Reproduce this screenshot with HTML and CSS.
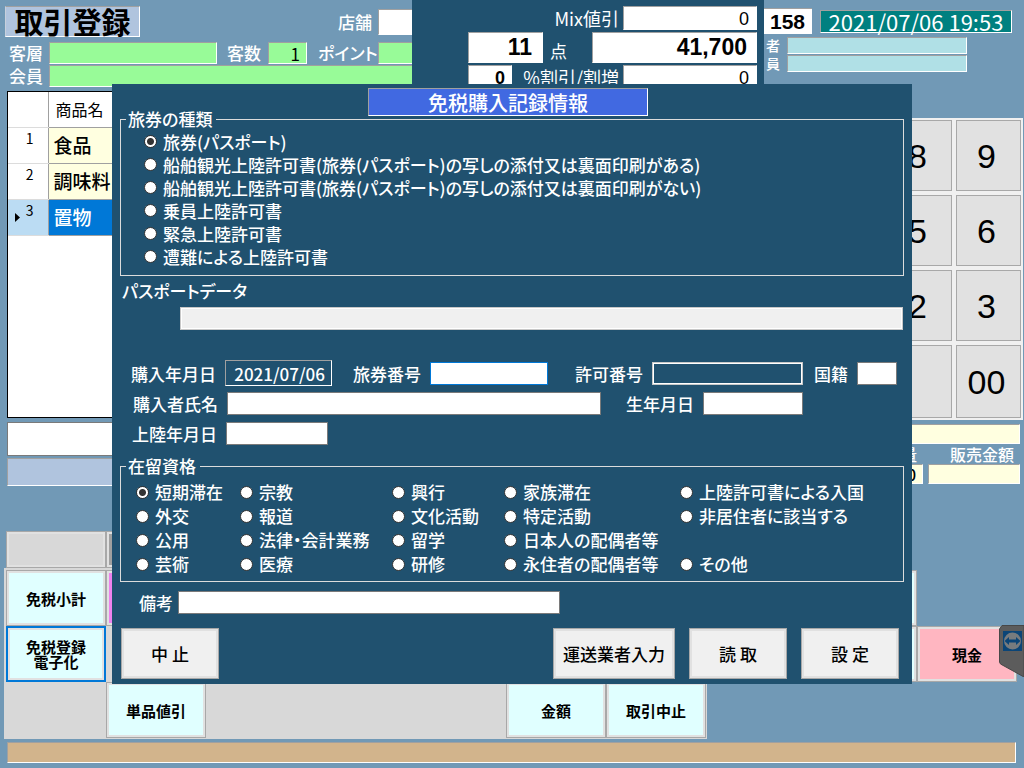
FILE: index.html
```html
<!DOCTYPE html>
<html lang="ja">
<head>
<meta charset="utf-8">
<meta name="viewport" content="width=device-width, initial-scale=1">
<title>免税購入記録情報</title>
<link rel="stylesheet" href="styles.css">
</head>
<body>
<div class="register">
  <header class="top">
    <div class="top-left">
      <div class="top-row title-row">
        <h1 class="screen-title">取引登録</h1>
        <label class="push" for="store">店舗</label>
        <input id="store" class="sunken clip-field tall" type="text">
      </div>
      <div class="top-row">
        <label class="lead" for="segment">客層</label>
        <input id="segment" class="sunken green segment" type="text">
        <label class="guests-label" for="guests">客数</label>
        <input id="guests" class="sunken green guests" type="text" value="1">
        <label class="points-label kana" for="points">ポイント</label>
        <input id="points" class="sunken green clip-field" type="text">
      </div>
      <div class="top-row">
        <label class="lead" for="member">会員</label>
        <input id="member" class="sunken green member" type="text">
      </div>
    </div>
    <div class="totals">
      <div class="total-row">
        <label class="push" for="mix">Mix値引</label>
        <output id="mix" class="sunken amount">0</output>
      </div>
      <div class="total-row big">
        <output id="count" class="sunken count">11</output>
        <label class="unit" for="count">点</label>
        <output class="sunken total">41,700</output>
      </div>
      <div class="total-row">
        <output id="rate" class="sunken rate">0</output>
        <label class="push" for="discount">%割引/割増</label>
        <output id="discount" class="sunken amount">0</output>
      </div>
    </div>
    <div class="top-right">
      <div class="status-row">
        <span class="receipt-no">158</span>
        <time class="clock" datetime="2021-07-06T19:53">2021/07/06 19:53</time>
      </div>
      <div class="staff-row">
        <label for="staff1">者</label>
        <input id="staff1" class="sunken powder" type="text">
      </div>
      <div class="staff-row">
        <label for="staff2">員</label>
        <input id="staff2" class="sunken powder" type="text">
      </div>
    </div>
  </header>

  <main class="work">
    <section class="sale">
      <div class="grid-frame">
        <table class="items">
          <thead><tr><th class="num"></th><th class="name">商品名</th></tr></thead>
          <tbody>
            <tr><th class="num">1</th><td>食品</td></tr>
            <tr><th class="num">2</th><td>調味料</td></tr>
            <tr class="selected"><th class="num"><svg class="marker" viewBox="0 0 5 9" aria-hidden="true"><path d="M0 0 5 4.500 0 9Z"/></svg>3</th><td>置物</td></tr>
          </tbody>
        </table>
      </div>
      <input class="entry" type="text" aria-label="入力">
      <div class="message"></div>
    </section>
    <section class="side">
      <div class="keypad">
        <button type="button">7</button><button type="button">8</button><button type="button">9</button>
        <button type="button">4</button><button type="button">5</button><button type="button">6</button>
        <button type="button">1</button><button type="button">2</button><button type="button">3</button>
        <button type="button">0</button><button type="button"></button><button type="button">00</button>
      </div>
      <div class="line-entry">
        <input class="sunken cream wide" type="text" aria-label="商品">
        <label for="qty">数量</label>
        <label for="price">販売金額</label>
        <input id="qty" class="sunken cream" type="text" value="0">
        <input id="price" class="sunken cream" type="text">
      </div>
    </section>
  </main>

  <section class="functions">
    <div class="fn-top">
      <button type="button" class="fn blank" aria-label="空き"></button>
      <button type="button" class="fn dim" aria-label="空き"></button>
    </div>
    <div class="fn-panels">
      <div class="fn-panel">
        <button type="button" class="fn">免税小計</button>
        <button type="button" class="fn violet" aria-label="小計"></button>
        <button type="button" class="fn current row2">免税登録<br>電子化</button>
        <button type="button" class="fn row3 col2">単品値引</button>
        <button type="button" class="fn row3 col6">金額</button>
        <button type="button" class="fn row3 col7">取引中止</button>
      </div>
      <div class="fn-panel plain">
        <button type="button" class="fn col2" aria-label="空き"></button>
        <button type="button" class="fn col2 row2" aria-label="空き"></button>
        <button type="button" class="fn pink col3 row2">現金</button>
      </div>
    </div>
  </section>
  <footer class="guide"></footer>

  <div class="overlay">
    <form class="dialog" role="dialog" aria-labelledby="dlg-title">
      <h2 id="dlg-title" class="dialog-title">免税購入記録情報</h2>

      <fieldset class="group passport-kind">
        <legend>旅券の種類</legend>
        <label><input type="radio" name="kind" checked>旅券(パスポート)</label>
        <label><input type="radio" name="kind">船舶観光上陸許可書(旅券(パスポート)の写しの添付又は裏面印刷がある)</label>
        <label><input type="radio" name="kind">船舶観光上陸許可書(旅券(パスポート)の写しの添付又は裏面印刷がない)</label>
        <label><input type="radio" name="kind">乗員上陸許可書</label>
        <label><input type="radio" name="kind">緊急上陸許可書</label>
        <label><input type="radio" name="kind">遭難による上陸許可書</label>
      </fieldset>

      <div class="passport-data">
        <label for="pdata">パスポートデータ</label>
        <input id="pdata" type="text" readonly>
      </div>

      <div class="fields">
        <div class="field-row row-a">
          <label for="bought">購入年月日</label>
          <output id="bought" class="date">2021/07/06</output>
          <label for="pno">旅券番号</label>
          <input id="pno" class="focused" type="text" autofocus>
          <label for="permit">許可番号</label>
          <input id="permit" class="off" type="text" readonly>
          <label for="nation">国籍</label>
          <input id="nation" type="text">
        </div>
        <div class="field-row row-b">
          <label for="buyer">購入者氏名</label>
          <input id="buyer" type="text">
          <label for="birth">生年月日</label>
          <input id="birth" type="text">
        </div>
        <div class="field-row row-c">
          <label for="landing">上陸年月日</label>
          <input id="landing" type="text">
        </div>
      </div>

      <fieldset class="group status">
        <legend>在留資格</legend>
        <div class="status-grid">
          <label><input type="radio" name="status" checked>短期滞在</label>
          <label><input type="radio" name="status">外交</label>
          <label><input type="radio" name="status">公用</label>
          <label><input type="radio" name="status">芸術</label>
          <label><input type="radio" name="status">宗教</label>
          <label><input type="radio" name="status">報道</label>
          <label><input type="radio" name="status">法律・会計業務</label>
          <label><input type="radio" name="status">医療</label>
          <label><input type="radio" name="status">興行</label>
          <label><input type="radio" name="status">文化活動</label>
          <label><input type="radio" name="status">留学</label>
          <label><input type="radio" name="status">研修</label>
          <label><input type="radio" name="status">家族滞在</label>
          <label><input type="radio" name="status">特定活動</label>
          <label><input type="radio" name="status">日本人の配偶者等</label>
          <label><input type="radio" name="status">永住者の配偶者等</label>
          <label><input type="radio" name="status">上陸許可書による入国</label>
          <label><input type="radio" name="status">非居住者に該当する</label>
          <label class="last"><input type="radio" name="status">その他</label>
        </div>
      </fieldset>

      <div class="remarks">
        <label for="note">備考</label>
        <input id="note" type="text">
      </div>

      <div class="actions">
        <button type="button" class="action cancel">中 止</button>
        <button type="button" class="action wide">運送業者入力</button>
        <button type="button" class="action">読 取</button>
        <button type="submit" class="action">設 定</button>
      </div>
    </form>
  </div>

  <svg class="remote-tab" viewBox="0 0 25 52" aria-hidden="true">
    <path d="M3 .5H25V52L1.500 39 .5 37V4Z" fill="#5c5c5c" stroke="#474747"/>
    <rect x="4" y="6" width="19" height="20" fill="#0b4577"/>
    <circle cx="13.500" cy="16" r="8.500" fill="#777b7e"/>
    <path d="M5.500 16 10 12V14.500H17V12L21.500 16 17 20V17.500H10V20Z" fill="#0b4577"/>
  </svg>
</div>
</body>
</html>
```
FILE: styles.css
```css
* {
  box-sizing: border-box;
}

body {
  margin: 0;
  background: #7199b6;
  color: #fff;
  font-family: "Noto Sans CJK JP", sans-serif;
  font-size: 17px;
  font-weight: 400;
  line-height: 20px;
}

input,
button {
  font: inherit;
  margin: 0;
  padding: 0;
  border-radius: 0;
  min-width: 0;
}

input {
  outline: none;
}

label {
  white-space: nowrap;
}

.register {
  position: relative;
  display: flex;
  flex-direction: column;
  min-height: 100vh;
  overflow: hidden;
}

.sunken {
  border: 1px solid #fff;
  border-top-color: #a0a0a0;
  border-left-color: #a0a0a0;
  background: #fff;
  color: #000;
}

.green { background: #98fb98; }
.powder { background: #b0e0e6; }
.cream { background: #ffffe0; }
.push { margin-left: auto; }
.kana { font-feature-settings: "palt"; }

/* Header */
.top {
  display: grid;
  grid-template-columns: 412fr 352fr 260fr;
  height: 84px;
}

.top-left {
  display: flex;
  flex-direction: column;
  gap: 1px;
  padding: 6px 0 0 9px;
  font-weight: 500;
}

.top-row {
  display: flex;
  align-items: center;
  line-height: 18px;
}

.top-row .sunken {
  height: 22px;
}

.title-row {
  height: 31px;
  margin: 0 0 4px -4px;
}

.screen-title {
  width: 135px;
  height: 31px;
  margin: 0;
  border: 1px solid #fff;
  border-top-color: #a0a0a0;
  border-left-color: #c8d0dc;
  background: #b0c4de;
  color: #000;
  font-size: 29px;
  font-weight: 700;
  line-height: 28px;
  text-align: center;
}

.lead { width: 40px; }
.segment { width: 168px; }
.guests-label { margin-left: 10px; }
.guests { width: 39px; margin-left: 7px; padding-right: 6px; font-weight: 400; text-align: right; }
.points-label { margin-left: 11px; }
.clip-field { width: 34px; margin-left: auto; border-right: 0; }
.title-row .clip-field { height: 26px; margin-left: 6px; }
.member { flex: 1; border-right: 0; }

.totals {
  display: flex;
  flex-direction: column;
  gap: 2px;
  padding: 6px 7px 0 56px;
  background: #20516f;
  font-size: 18px;
}

.total-row {
  display: flex;
  align-items: center;
  height: 24px;
  flex: none;
}

.total-row.big { height: 31px; }

.amount,
.count,
.total,
.rate {
  height: 100%;
  font-family: "Liberation Sans", Arial, sans-serif;
  font-size: 18px;
  line-height: 24px;
  text-align: right;
}

.amount { width: 134px; margin-left: 4px; padding-right: 7px; }
.count { width: 75px; padding-right: 10px; font-size: 23px; font-weight: 700; line-height: 29px; }
.unit { margin: 6px 0 0 7px; font-size: 17px; }
.total { width: 165px; margin-left: auto; padding-right: 9px; font-size: 23px; font-weight: 700; line-height: 29px; }
.rate { width: 44px; padding-right: 6px; font-weight: 700; }

.top-right {
  padding-top: 8px;
}

.status-row {
  display: flex;
  align-items: center;
  gap: 8px;
  padding-right: 12px;
}

.receipt-no {
  width: 48px;
  height: 26px;
  padding-left: 6px;
  border-top: 1px solid #a0a0a0;
  background: #fff;
  color: #000;
  font-family: "Liberation Sans", Arial, sans-serif;
  font-size: 21px;
  font-weight: 700;
  line-height: 25px;
}

.clock {
  flex: 1;
  height: 23px;
  border: 1px solid #fff;
  border-top-color: #a0a0a0;
  border-left-color: #a0a0a0;
  background: #008080;
  font-size: 22px;
  line-height: 21px;
  text-align: center;
  white-space: nowrap;
}

.staff-row {
  display: flex;
  align-items: center;
  height: 18px;
  padding: 0 57px 0 2px;
  font-size: 14px;
  font-weight: 500;
}

.status-row + .staff-row { margin-top: 2px; }
.staff-row label { width: 21px; }
.staff-row input { flex: 1; height: 17px; }

/* Sale list and keypad */
.work {
  display: flex;
}

.sale {
  flex: 1;
  display: flex;
  flex-direction: column;
  padding: 7px 8px 0 7px;
}

.grid-frame {
  height: 327px;
  border: 1px solid #000;
  background: #fff;
}

.items {
  width: 100%;
  border-collapse: collapse;
  color: #000;
}

.items th,
.items td {
  height: 36px;
  padding: 0;
  border-bottom: 1px solid #a0a0a0;
  font-weight: 500;
  text-align: left;
}

.items td {
  padding-left: 5px;
  background: #ffffe0;
  font-size: 19px;
}

.items .num {
  width: 40px;
  padding: 0 14px 8px 5px;
  border-right: 1px solid #a0a0a0;
  border-bottom-color: #dcdcdc;
  font-size: 14px;
  font-weight: 400;
  text-align: right;
  vertical-align: top;
}

.items thead th {
  height: 35px;
}

.items .name {
  padding-left: 7px;
  font-size: 16px;
  font-weight: 400;
}

.items .selected td {
  background: #0078d7;
  color: #fff;
}

.items .selected .num {
  background: #bbdcf3;
}

.marker {
  width: 5px;
  height: 9px;
  margin: 0 6px -6px 0;
}

.entry {
  height: 34px;
  margin-top: 4px;
  border: 1px solid #7a7a7a;
  background: #fff;
}

.message {
  height: 28px;
  margin-top: 2px;
  border-top: 1px solid #a0a0a0;
  border-left: 1px solid #a0a0a0;
  border-bottom: 1px solid #fff;
  background: #b0c4de;
}

.side {
  flex: none;
  width: 208px;
  padding: 34px 1px 0 0;
}

.keypad {
  display: grid;
  grid-template-columns: repeat(3, 65px);
  grid-template-rows: 71px 71px 71px 73px;
  gap: 4px;
  padding: 2px;
  background: #f0f0f0;
}

.keypad button {
  padding-right: 4px;
  border: 1px solid #a8a8a8;
  background: #e1e1e1;
  color: #000;
  font-family: "Liberation Sans", Arial, sans-serif;
  font-size: 34px;
}

.line-entry {
  display: grid;
  grid-template-columns: minmax(0, 1fr) 92px;
  grid-template-rows: 20px 20px 20px;
  column-gap: 5px;
  padding: 4px 3px 0 0;
  font-size: 16px;
  font-weight: 500;
  text-align: right;
}

.line-entry .wide { grid-column: 1 / 3; }
.line-entry label { padding-right: 6px; }
.line-entry #qty { padding-right: 6px; text-align: right; }

/* Function keys */
.functions {
  margin-top: 45px;
}

.fn-top {
  display: flex;
  padding-left: 6px;
}

.fn-top .fn {
  width: 100px;
  height: 37px;
}

.fn-panels {
  display: flex;
  gap: 8px;
}

.fn-panel {
  display: grid;
  grid-template-columns: repeat(7, 100px);
  grid-template-rows: repeat(3, 56px);
  margin-left: 4px;
  padding: 2px 1px 1px 2px;
  background: #d8d8d8;
}

.fn-panel.plain {
  grid-template-columns: repeat(3, 100px);
  margin-left: 0;
  background: none;
}

.fn {
  border: 1px solid #a8a8a8;
  background: #e0ffff;
  box-shadow: inset 0 0 0 2px #e1e1e1;
  color: #000;
  font-size: 15px;
  font-weight: 700;
  line-height: 15px;
}

.fn.blank { background: #d8d8d8; }
.fn.dim { background: #a0a0a0; }
.fn.violet { background: #ee82ee; }
.fn.pink { background: #ffb6c1; }
.fn.current { border: 2px solid #0078d7; }
.row2 { grid-row: 2; }
.row3 { grid-row: 3; }
.col2 { grid-column: 2; }
.col3 { grid-column: 3; }
.col6 { grid-column: 6; }
.col7 { grid-column: 7; }

.guide {
  height: 21px;
  margin: 3px 8px 5px 7px;
  border: 1px solid #fff;
  border-top-color: #a0a0a0;
  border-left-color: #a0a0a0;
  background: #d2b48c;
}

/* Tax-free record dialog */
.overlay {
  position: absolute;
  inset: 0;
  padding: 84px 112px;
}

.dialog {
  padding: 4px 8px 5px;
  background: #20516f;
  font-weight: 500;
}

.dialog-title {
  width: 280px;
  height: 28px;
  margin: 0 0 0 248px;
  border: 1px solid #fff;
  border-top-color: #a0a0a0;
  border-left-color: #a0a0a0;
  background: #4169e1;
  font-size: 20px;
  font-weight: 500;
  line-height: 27px;
  text-align: center;
}

.group {
  min-width: 0;
  margin: 0;
  border: 1px solid #dcdcdc;
}

.group legend {
  margin-left: 5px;
  padding: 0 4px 0 2px;
  line-height: 14px;
}

.group label,
.passport-data label,
.group legend {
  font-feature-settings: "palt";
}

.group label {
  display: flex;
  align-items: center;
  gap: 6px;
}

.group input {
  appearance: none;
  flex: none;
  width: 13px;
  height: 13px;
  border: 1px solid #333;
  border-radius: 50%;
  background: #fff;
}

.group input:checked {
  background: radial-gradient(circle, #333 3px, #fff 4px);
}

.passport-kind {
  margin-top: -4px;
  padding: 4px 0 7px;
}

.passport-kind label {
  height: 23px;
  padding-left: 23px;
}

.passport-data {
  display: flex;
  flex-direction: column;
  padding: 5px 1px 0 2px;
}

.passport-data input {
  height: 23px;
  margin: 6px 0 0 58px;
  border: 1px solid #c8c8c8;
  background: #f0f0f0;
  box-shadow: inset 0 0 0 1px #fff;
}

.fields {
  display: flex;
  flex-direction: column;
  gap: 7px;
  margin: 32px 7px 0 9px;
}

.field-row {
  display: grid;
  align-items: center;
  height: 23px;
}

.row-a { grid-template-columns: 96px 107fr 98px 118fr 104px 151fr 54px 40fr; }
.row-b { grid-template-columns: 98px 374fr 102px 100fr 94fr; }
.row-c { grid-template-columns: 97px 102fr 569fr; }

.field-row label {
  padding-right: 9px;
  text-align: right;
}

.field-row input,
.remarks input {
  height: 23px;
  border: 1px solid #7a7a7a;
  background: #fff;
}

.field-row .focused {
  padding-left: 2px;
  border-color: #0078d7;
  caret-color: #000;
}

.field-row .off {
  border-color: #c8c8c8;
  background: #20516f;
  box-shadow: inset 0 0 0 1px #fff;
}

.date {
  height: 26px;
  margin: -2px 0 -1px;
  padding-right: 6px;
  border: 1px solid #fff;
  border-top-color: #a0a0a0;
  border-left-color: #a0a0a0;
  line-height: 25px;
  text-align: right;
}

.status {
  margin-top: 14px;
  padding: 7px 0 5px;
}

.status-grid {
  display: grid;
  grid-template-columns: 104fr 152fr 112fr 176fr 208fr;
  grid-template-rows: repeat(4, 24px);
  grid-auto-flow: column;
  margin: 0 15px;
}

.status-grid .last {
  grid-row: 4;
}

.remarks {
  display: flex;
  align-items: center;
  gap: 5px;
  margin: 9px 344px 0 19px;
}

.remarks input {
  flex: 1;
}

.actions {
  display: flex;
  gap: 14px;
  margin: 14px 5px 0 1px;
}

.action {
  width: 98px;
  height: 51px;
  border: 1px solid #a8a8a8;
  background: #f0f0f0;
  box-shadow: inset 0 0 0 2px #e1e1e1;
  color: #000;
  white-space: pre;
}

.action.wide { width: 122px; }
.action.cancel { margin-right: auto; }

/* Remote support tab docked on the right edge */
.remote-tab {
  position: absolute;
  top: 625px;
  right: 0;
  width: 25px;
  height: 52px;
}
```
